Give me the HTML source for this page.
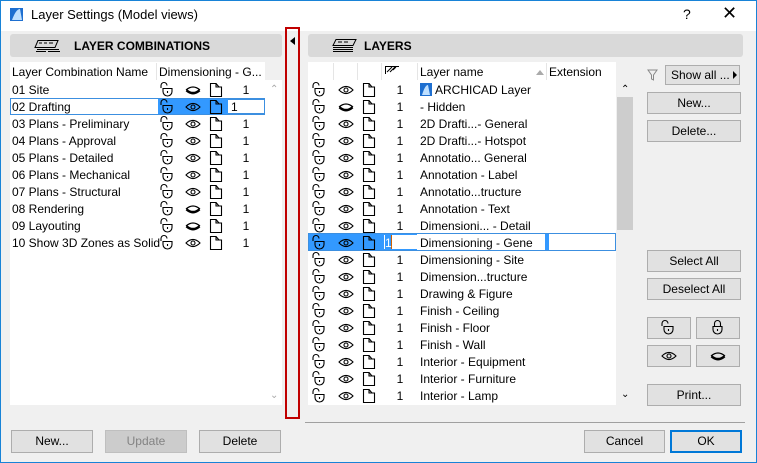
<!DOCTYPE html>
<html><head><meta charset="utf-8"><style>
*{box-sizing:border-box;margin:0;padding:0}
body{width:757px;height:463px;overflow:hidden;background:#f0f0f0;font-family:"Liberation Sans",sans-serif;font-size:12px;color:#000;position:relative}
.a{position:absolute}
.win{left:0;top:0;width:757px;height:463px;border:1px solid #1883d7}
.title{left:1px;top:1px;width:755px;height:30px;background:#fff}
.hdr{background:#d9d9d9;border-radius:3px;font-weight:bold;font-size:12px}
.list{background:#fff}
.row{position:absolute;height:17px;line-height:18px;white-space:nowrap}
.btn{position:absolute;background:#e1e1e1;border:1px solid #adadad;text-align:center;line-height:20px;height:22px}
.num{position:absolute;width:12px;text-align:center}
svg.i{position:absolute;overflow:visible}
</style></head><body>
<svg width="0" height="0" style="position:absolute">
<defs>
<g id="lk" fill="none" stroke="#000" stroke-width="1.1"><path d="M1 6 V3.5 A3 3 0 0 1 7 3.5"/><path d="M3 6.5 H12 V9.5 A4.5 4.5 0 0 1 3 9.5 Z"/><path d="M7.5 9v2"/></g>
<g id="lc" fill="none" stroke="#000" stroke-width="1.1"><path d="M3.5 6.5 V3.5 A3 3 0 0 1 9.5 3.5 V6.5"/><path d="M2 6.5 H11 V9.5 A4.5 4.5 0 0 1 2 9.5 Z"/><path d="M6.5 9v2"/></g>
<g id="ey" fill="none" stroke="#000" stroke-width="1.1"><path d="M1 6 Q8 -1 15 6 Q8 13 1 6Z"/><circle cx="8" cy="6" r="2"/></g>
<g id="eh" fill="none" stroke="#000"><path d="M1 6 Q8 0 15 6" stroke-width="1.2"/><path d="M1.5 6.3 Q8 12 14.5 6.3" stroke-width="2.6"/></g>
<g id="pg" fill="none" stroke="#000" stroke-width="1.1"><path d="M1.5 14.5 V1.5 H7 V5 H12.5 V14.5 Z M7 1.5 L10 5"/></g>
</defs></svg>
<div class="a win"></div>
<div class="a title"></div>
<svg class="a" style="left:10px;top:7px" width="14" height="15"><rect x="0" y="1" width="13" height="13" fill="#1e6fd0"/><path d="M2 13 Q6 2 10 2 L12 13Z" fill="#bfe0ff"/></svg>
<div class="a" style="left:31px;top:7px;font-size:13px;color:#000">Layer Settings (Model views)</div>
<div class="a" style="left:683px;top:6px;font-size:14px">?</div>
<div class="a" style="left:722px;top:3px;font-size:18px">✕</div>

<div class="a hdr" style="left:10px;top:34px;width:272px;height:23px"></div>
<svg class="a" style="left:34px;top:39px" width="30" height="14"><path fill="none" stroke="#000" stroke-width="1" d="M4 1.5h20l-3 7H1z M5 4h3 M10 4h3 M15 4h4 M3 10.5h22 M2 12.5h10 M14 12.5h12"/></svg>
<div class="a" style="left:74px;top:39px;font-weight:bold">LAYER COMBINATIONS</div>

<div class="a list" style="left:10px;top:62px;width:255px;height:343px"></div>
<div class="a" style="left:265px;top:80px;width:17px;height:325px;background:#fff"></div>
<div class="a" style="left:270px;top:84px;color:#aaa;font-size:10px">⌃</div>
<div class="a" style="left:270px;top:390px;color:#aaa;font-size:10px">⌄</div>
<div class="a" style="left:156px;top:63px;width:1px;height:17px;background:#e5e5e5"></div>
<div class="row" style="left:12px;top:63px">Layer Combination Name</div>
<div class="row" style="left:159px;top:63px">Dimensioning - G...</div>

<div class="a" style="left:10px;top:98px;width:255px;height:17px;border:1px solid #3c8fe0"></div>
<div class="a" style="left:158px;top:99px;width:70px;height:15px;background:#3399ff"></div>

<div id="L"></div>

<div class="a" style="left:285px;top:27px;width:15px;height:392px;border:2px solid #c00000"></div>
<div class="a" style="left:290px;top:37px;width:0;height:0;border-top:4px solid transparent;border-bottom:4px solid transparent;border-right:5px solid #000"></div>

<div class="a hdr" style="left:308px;top:34px;width:435px;height:23px"></div>
<svg class="a" style="left:331px;top:38px" width="26" height="16"><path fill="none" stroke="#000" stroke-width="1" d="M5 1.5h20l-3 6H2z M7 4h4 M13 4h4 M2 9.5h20 M2 11.5h20 M2 13.5h20"/></svg>
<div class="a" style="left:364px;top:39px;font-weight:bold">LAYERS</div>

<div class="a list" style="left:308px;top:62px;width:308px;height:343px"></div>
<div class="a" style="left:616px;top:80px;width:17px;height:325px;background:#f0f0f0"></div>
<div class="a" style="left:617px;top:97px;width:16px;height:133px;background:#cdcdcd"></div>
<div class="a" style="left:621px;top:84px;font-size:10px">⌃</div>
<div class="a" style="left:621px;top:389px;font-size:10px">⌄</div>
<div class="a" style="left:333px;top:63px;width:1px;height:17px;background:#e5e5e5"></div>
<div class="a" style="left:357px;top:63px;width:1px;height:17px;background:#e5e5e5"></div>
<div class="a" style="left:381px;top:63px;width:1px;height:17px;background:#e5e5e5"></div>
<div class="a" style="left:417px;top:63px;width:1px;height:17px;background:#e5e5e5"></div>
<div class="a" style="left:546px;top:63px;width:1px;height:17px;background:#e5e5e5"></div>
<svg class="a" style="left:384px;top:65px" width="16" height="10"><path fill="none" stroke="#000" stroke-width="1" d="M1 1.5h14 M1.5 1v8 M3 7l5-5 M6 7l5-5 M9 5l3-3"/></svg>
<div class="row" style="left:420px;top:63px">Layer name</div>
<div class="a" style="left:536px;top:70px;border-left:4px solid transparent;border-right:4px solid transparent;border-bottom:5px solid #aaa"></div>
<div class="row" style="left:549px;top:63px">Extension</div>

<div class="a" style="left:308px;top:233px;width:308px;height:18px;border:1px solid #3c8fe0;background:#fff"></div>
<div class="a" style="left:309px;top:234px;width:108px;height:16px;background:#3399ff"></div>
<div class="a" style="left:384px;top:235px;width:33px;height:14px;background:#fff"></div>
<div class="a" style="left:385px;top:235px;width:7px;height:14px;background:#3399ff;border-right:1px solid #d06000"></div>
<div class="a" style="left:545px;top:234px;width:4px;height:16px;background:#3399ff"></div>
<div id="R"></div>

<svg class="a" style="left:647px;top:69px" width="11" height="12"><path fill="none" stroke="#888" stroke-width="1" d="M1 1h9L6.5 6v5L4.5 10V6z"/></svg>
<div class="btn" style="left:665px;top:65px;width:75px;height:20px;line-height:18px;text-align:left;padding-left:5px">Show all ...</div>
<div class="a" style="left:733px;top:71px;border-top:4px solid transparent;border-bottom:4px solid transparent;border-left:4px solid #000"></div>
<div class="btn" style="left:647px;top:92px;width:94px">New...</div>
<div class="btn" style="left:647px;top:120px;width:94px">Delete...</div>
<div class="btn" style="left:647px;top:250px;width:94px">Select All</div>
<div class="btn" style="left:647px;top:278px;width:94px">Deselect All</div>
<div class="btn" style="left:647px;top:317px;width:44px"></div>
<div class="btn" style="left:696px;top:317px;width:44px"></div>
<div class="btn" style="left:647px;top:345px;width:44px"></div>
<div class="btn" style="left:696px;top:345px;width:44px"></div>
<svg class="i" style="left:661px;top:320px" width="14" height="16"><use href="#lk"/></svg>
<svg class="i" style="left:711px;top:320px" width="14" height="16"><use href="#lc"/></svg>
<svg class="i" style="left:661px;top:350px" width="16" height="13"><use href="#ey"/></svg>
<svg class="i" style="left:710px;top:350px" width="16" height="13"><use href="#eh"/></svg>
<div class="btn" style="left:647px;top:384px;width:94px">Print...</div>

<div class="a" style="left:305px;top:422px;width:440px;height:1px;background:#a0a0a0"></div>
<div class="btn" style="left:584px;top:430px;width:81px;height:23px">Cancel</div>
<div class="btn" style="left:670px;top:430px;width:72px;height:23px;border:2px solid #0078d7;line-height:19px">OK</div>

<div class="btn" style="left:11px;top:430px;width:82px;height:23px">New...</div>
<div class="btn" style="left:105px;top:430px;width:82px;height:23px;background:#cccccc;border-color:#bfbfbf;color:#838383">Update</div>
<div class="btn" style="left:199px;top:430px;width:82px;height:23px">Delete</div>

<script>
var L=["01 Site","02 Drafting","03 Plans - Preliminary","04 Plans - Approval","05 Plans - Detailed","06 Plans - Mechanical","07 Plans - Structural","08 Rendering","09 Layouting","10 Show 3D Zones as Solid"];
var Lh={0:1,7:1,8:1};
var h="";
L.forEach(function(t,i){var y=81+17*i;
h+='<div class="row" style="left:12px;top:'+y+'px">'+t+'</div>';
h+='<svg class="i" style="left:160px;top:'+(y+1)+'px" width="14" height="16"><use href="#lk"/></svg>';
h+='<svg class="i" style="left:185px;top:'+(y+3)+'px" width="16" height="13"><use href="#'+(Lh[i]?'eh':'ey')+'"/></svg>';
h+='<svg class="i" style="left:209px;top:'+(y+1)+'px" width="14" height="16"><use href="#pg"/></svg>';
if(i==1){h+='<div class="a" style="left:228px;top:'+(y+1)+'px;width:37px;height:15px;background:#fff;border:1px solid #3c8fe0;border-left:0"></div><div class="row" style="left:231px;top:'+y+'px">1</div>';}
else h+='<div class="num" style="left:240px;top:'+y+'px;line-height:18px">1</div>';
});
document.getElementById("L").innerHTML=h;
var R=["ARCHICAD Layer","- Hidden","2D Drafti...- General","2D Drafti...- Hotspot","Annotatio... General","Annotation - Label","Annotatio...tructure","Annotation - Text","Dimensioni... - Detail","Dimensioning - Gene","Dimensioning - Site","Dimension...tructure","Drawing &amp; Figure","Finish - Ceiling","Finish - Floor","Finish - Wall","Interior - Equipment","Interior - Furniture","Interior - Lamp"];
h="";
R.forEach(function(t,i){var y=81+17*i;
var x=420;
if(i==0){h+='<svg class="i" style="left:420px;top:'+(y+2)+'px" width="12" height="13"><rect width="12" height="13" fill="#1e6fd0"/><path d="M2 12 Q5 2 8 2 L10 12Z" fill="#bfe0ff"/></svg>';x=435;}
h+='<div class="row" style="left:'+x+'px;top:'+y+'px">'+t+'</div>';
h+='<svg class="i" style="left:312px;top:'+(y+1)+'px" width="14" height="16"><use href="#lk"/></svg>';
h+='<svg class="i" style="left:338px;top:'+(y+3)+'px" width="16" height="13"><use href="#'+(i==1?'eh':'ey')+'"/></svg>';
h+='<svg class="i" style="left:362px;top:'+(y+1)+'px" width="14" height="16"><use href="#pg"/></svg>';
if(i!=9)h+='<div class="num" style="left:394px;top:'+y+'px;line-height:18px">1</div>';
else h+='<div class="row" style="left:385px;top:'+y+'px;color:#fff">1</div>';
});
document.getElementById("R").innerHTML=h;
</script>
</body></html>
